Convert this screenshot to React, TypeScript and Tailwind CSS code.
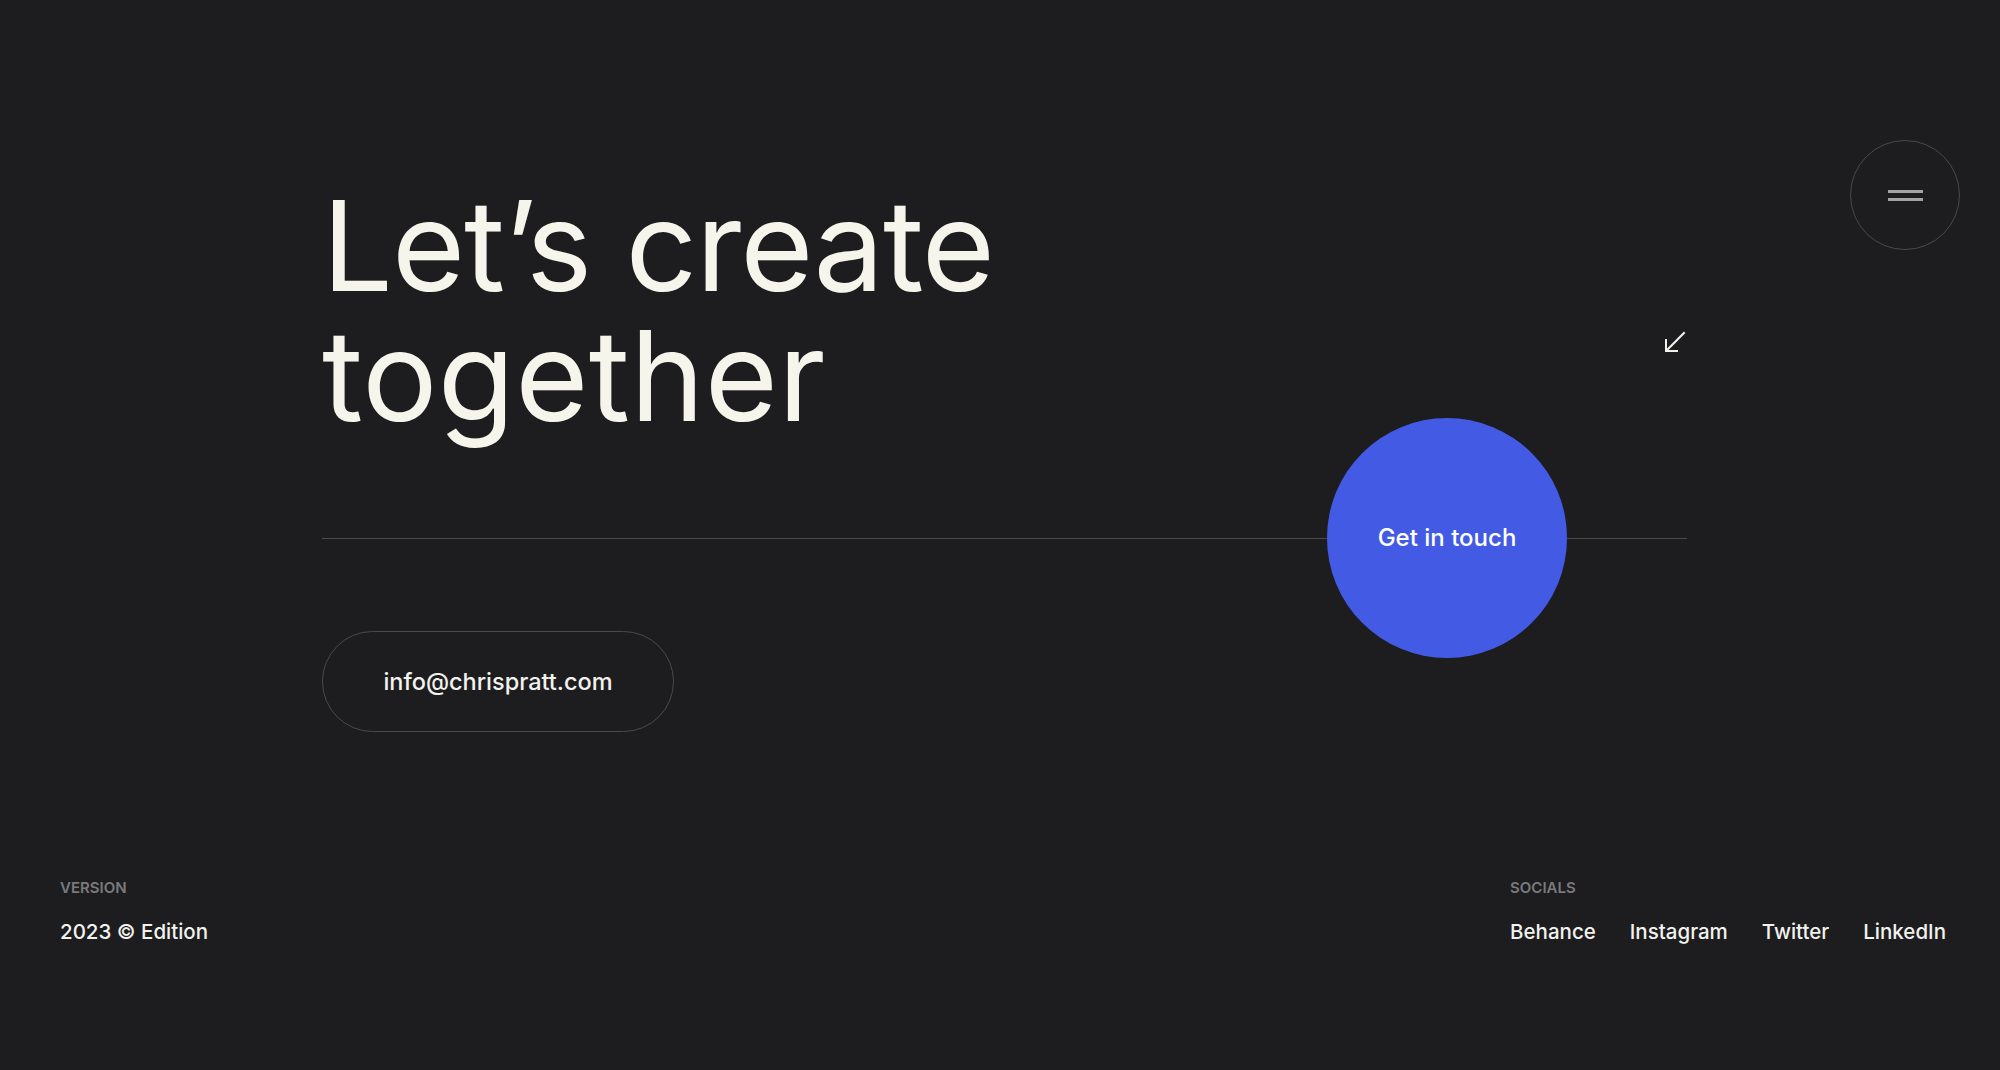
import React from "react";

export default function App() {
  return (
    <div
      className="relative w-[2000px] h-[1070px] bg-[#1d1d1f] overflow-hidden"
      style={{ fontFamily: "Inter, 'Noto Sans', sans-serif" }}
    >
      {/* menu button */}
      <button className="absolute left-[1850px] top-[140px] w-[110px] h-[110px] rounded-full border border-[#4a4a4c] flex flex-col items-center justify-center gap-[5px]">
        <span className="block w-[35px] h-[3px] bg-[#a3a3a3]" />
        <span className="block w-[35px] h-[3px] bg-[#a3a3a3]" />
      </button>

      <div className="ml-[322px] w-[1365px] pt-[180px]">
        <div className="flex justify-between items-start">
          <h1 className="text-[125.5px] leading-[130px] font-normal text-[#f6f5ec]">
            <span className="block tracking-[-0.0085em]">Let’s create</span>
            <span className="block tracking-[0.003em]">together</span>
          </h1>
          <svg
            className="mt-[150px]"
            width="24"
            height="24"
            viewBox="0 0 24 24"
            fill="none"
            stroke="#f2f2ee"
            strokeWidth="2"
            strokeLinecap="square"
          >
            <path d="M21 3L4 20" />
            <path d="M3 9V21H15" strokeLinecap="butt" />
          </svg>
        </div>

        <div className="relative mt-[98px] h-px bg-[#4a4a4c]">
          <div className="absolute right-[120px] top-[-120px] w-[240px] h-[240px] rounded-full bg-[#435be4] flex items-center justify-center text-[24px] font-medium text-white">
            Get in touch
          </div>
        </div>

        <div className="mt-[92px] inline-flex items-center justify-center h-[101px] w-[352px] rounded-full border border-[#4a4a4c] text-[23.5px] font-medium text-[#f2f2ee]">
          info@chrispratt.com
        </div>
      </div>

      <div className="absolute left-0 right-0 top-[878px] flex justify-between pl-[60px] pr-[54px]">
        <div className="flex flex-col gap-[20px]">
          <div className="text-[15px] leading-[20px] font-semibold text-[#7a7a7c] uppercase">Version</div>
          <div className="text-[20.5px] leading-[28px] font-medium text-[#f2f2ee]">2023 © Edition</div>
        </div>
        <div className="flex flex-col gap-[20px]">
          <div className="text-[15px] leading-[20px] font-semibold text-[#7a7a7c] uppercase">Socials</div>
          <div className="flex gap-[34px] text-[20.5px] leading-[28px] font-medium text-[#f2f2ee]">
            <span>Behance</span>
            <span>Instagram</span>
            <span>Twitter</span>
            <span>LinkedIn</span>
          </div>
        </div>
      </div>
    </div>
  );
}
